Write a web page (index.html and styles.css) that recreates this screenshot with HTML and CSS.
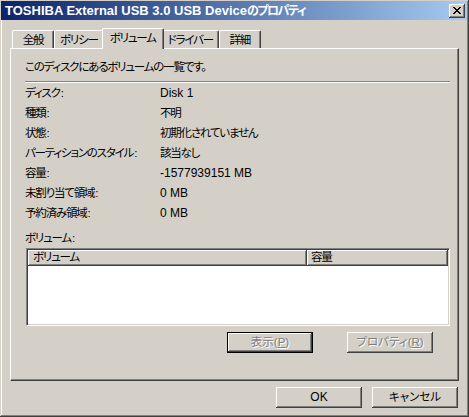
FILE: index.html
```html
<!DOCTYPE html>
<html lang="ja">
<head>
<meta charset="utf-8">
<title>TOSHIBA External USB 3.0 USB Deviceのプロパティ</title>
<link rel="stylesheet" href="styles.css">
</head>
<body>
<div class="window">
  <div class="titlebar">
    <span class="title">TOSHIBA External USB 3.0 USB Device<span class="title-jp">のプロパティ</span></span>
    <div class="close">
      <svg width="8" height="7" viewBox="0 0 8 7" shape-rendering="crispEdges"><path d="M0 0h2v1H0zM6 0h2v1H6zM1 1h2v1H1zM5 1h2v1H5zM2 2h4v1H2zM3 3h2v1H3zM2 4h4v1H2zM1 5h2v1H1zM5 5h2v1H5zM0 6h2v1H0zM6 6h2v1H6z" fill="#000"/></svg>
    </div>
  </div>
  <div class="body">
    <div class="tabs">
      <div class="tab">全般</div>
      <div class="tab">ポリシー</div>
      <div class="tab tab-active">ボリューム</div>
      <div class="tab">ドライバー</div>
      <div class="tab">詳細</div>
    </div>
    <div class="panel">
      <p class="intro">このディスクにあるボリュームの一覧です。</p>
      <div class="sep"></div>
      <div class="props">
        <div>ディスク<span class="colon">:</span></div><div class="latin">Disk 1</div>
        <div>種類<span class="colon">:</span></div><div>不明</div>
        <div>状態<span class="colon">:</span></div><div>初期化されていません</div>
        <div>パーティションのスタイル<span class="colon">:</span></div><div>該当なし</div>
        <div>容量<span class="colon">:</span></div><div class="latin">-1577939151 MB</div>
        <div>未割り当て領域<span class="colon">:</span></div><div class="latin">0 MB</div>
        <div>予約済み領域<span class="colon">:</span></div><div class="latin">0 MB</div>
      </div>
      <div class="vol-label">ボリューム<span class="colon">:</span></div>
      <div class="listview">
        <div class="lv-head">
          <div class="lv-col lv-col-name">ボリューム</div>
          <div class="lv-col lv-col-size">容量</div>
        </div>
      </div>
      <div class="panel-buttons">
        <button class="btn btn-default" disabled>表示(<u>P</u>)</button>
        <button class="btn" disabled>プロパティ(<u>R</u>)</button>
      </div>
    </div>
    <div class="dialog-buttons">
      <button class="btn latin">OK</button>
      <button class="btn">キャンセル</button>
    </div>
  </div>
</div>
</body>
</html>
```
FILE: styles.css
```css
html, body {
  margin: 0;
  padding: 0;
}
body {
  width: 469px;
  height: 417px;
  overflow: hidden;
  background: #d4d0c8;
  color: #000;
  font-family: "Liberation Sans", "Noto Sans CJK JP", sans-serif;
  font-size: 11.5px;
  font-feature-settings: "palt";
  letter-spacing: -1.2px;
}
.latin {
  font-size: 12px;
  letter-spacing: 0;
}
.colon {
  letter-spacing: 0;
  margin-left: 1px;
}
.window {
  box-sizing: border-box;
  width: 469px;
  height: 417px;
  padding: 1px 2px 2px 1px;
  background: #d4d0c8;
  box-shadow: inset -1px -1px #404040, inset 1px 1px #d4d0c8, inset -2px -2px #808080, inset 2px 2px #fff;
}
.titlebar {
  height: 19px;
  display: flex;
  align-items: center;
  justify-content: space-between;
  background: linear-gradient(to right, #0a246a, #a6caf0);
  padding: 0 2px 0 4px;
}
.title {
  color: #fff;
  font-weight: bold;
  font-size: 13px;
  line-height: 19px;
  letter-spacing: 0;
  white-space: nowrap;
}
.title-jp {
  font-size: 12px;
  letter-spacing: -1.5px;
}
.close {
  width: 16px;
  height: 14px;
  box-sizing: border-box;
  background: #d4d0c8;
  display: flex;
  align-items: center;
  justify-content: center;
  box-shadow: inset -1px -1px #404040, inset 1px 1px #fff, inset -2px -2px #808080;
}
.close svg {
  display: block;
  margin-left: -1px;
}
.body {
  padding: 8px 8px 0 9px;
}
.tabs {
  height: 20px;
  display: flex;
  align-items: flex-end;
  padding-left: 2px;
}
.tab {
  box-sizing: border-box;
  height: 18px;
  min-width: 42px;
  padding: 2px 5px 0;
  line-height: 14px;
  text-align: center;
  white-space: nowrap;
  border-top: 1px solid #fff;
  border-left: 1px solid #fff;
  border-right: 1px solid #404040;
  border-radius: 2px 2px 0 0;
  box-shadow: inset -1px 0 #808080;
  background: #d4d0c8;
}
.tab-active {
  position: relative;
  z-index: 1;
  height: 21px;
  margin: 0 -2px -1px;
  padding: 2px 7px 0;
}
.panel {
  box-sizing: border-box;
  width: 449px;
  height: 333px;
  border-top: 1px solid #fff;
  border-left: 1px solid #fff;
  border-right: 1px solid #404040;
  border-bottom: 1px solid #404040;
  box-shadow: inset -1px -1px #808080;
  padding: 11px 8px 0 14px;
}
.intro {
  margin: 0;
  line-height: 14px;
}
.sep {
  margin-top: 7px;
  height: 1px;
  border-top: 1px solid #808080;
  background: #fff;
}
.props {
  display: grid;
  grid-template-columns: 135px 1fr;
  grid-auto-rows: 20px;
  align-items: center;
  line-height: 14px;
}
.vol-label {
  margin-top: 8px;
  line-height: 14px;
}
.listview {
  box-sizing: border-box;
  height: 78px;
  margin-top: 3px;
  margin-left: 1px;
  background: #fff;
  border-top: 1px solid #808080;
  border-left: 1px solid #808080;
  border-right: 1px solid #fff;
  border-bottom: 1px solid #fff;
  box-shadow: inset 1px 1px #404040, inset -1px -1px #d4d0c8;
  padding: 1px;
}
.lv-head {
  display: flex;
  height: 16px;
}
.lv-col {
  box-sizing: border-box;
  height: 16px;
  line-height: 15px;
  padding-left: 5px;
  background: #d4d0c8;
  box-shadow: inset -1px -1px #404040, inset 1px 1px #fff, inset -2px -2px #808080;
}
.lv-col-name {
  width: 279px;
}
.lv-col-size {
  flex: 1;
  padding-left: 4px;
}
.panel-buttons {
  display: flex;
  justify-content: flex-end;
  gap: 34px;
  margin-top: 6px;
  padding-right: 17px;
}
.dialog-buttons {
  display: flex;
  justify-content: flex-end;
  gap: 10px;
  margin-top: 6px;
  padding-right: 1px;
}
.btn {
  box-sizing: border-box;
  width: 86px;
  height: 21px;
  padding: 0;
  border: none;
  background: #d4d0c8;
  font: inherit;
  color: #000;
  line-height: 19px;
  box-shadow: inset -1px -1px #404040, inset 1px 1px #fff, inset -2px -2px #808080;
}
.btn.latin {
  font-size: 12px;
  letter-spacing: 0;
}
.btn-default {
  border: 1px solid #000;
}
.btn:disabled {
  color: #808080;
  text-shadow: 1px 1px 0 #fff;
}
.btn u {
  text-decoration: underline;
}
```
